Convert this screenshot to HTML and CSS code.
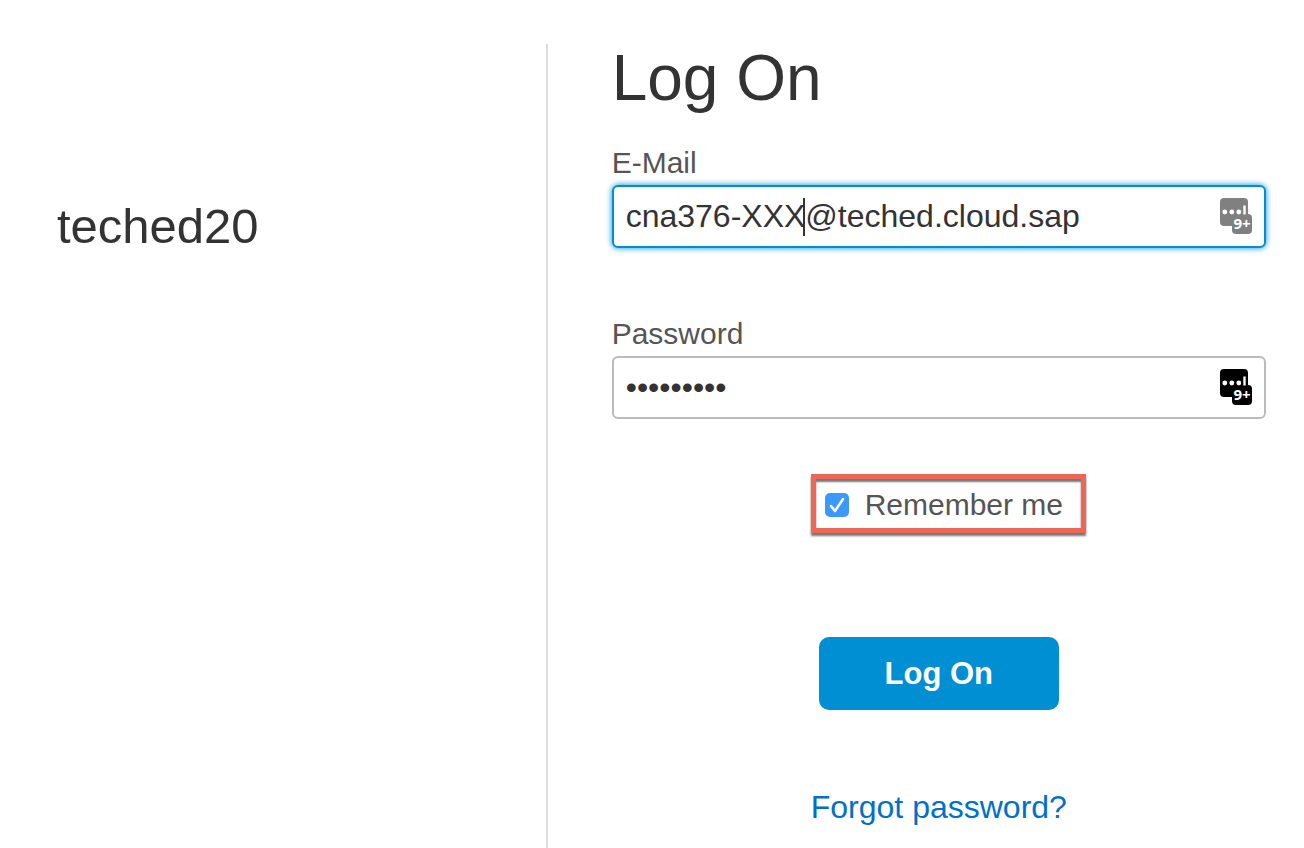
FILE: index.html
```html
<!DOCTYPE html>
<html lang="en">
<head>
<meta charset="utf-8">
<meta name="viewport" content="width=device-width, initial-scale=1">
<title>Log On</title>
<link rel="stylesheet" href="styles.css">
</head>
<body>
<div class="page">
  <aside class="brand">teched20</aside>
  <main class="logon">
    <h1 class="title">Log On</h1>
    <form class="form">
      <div class="field">
        <label class="label" for="email">E-Mail</label>
        <div class="control">
          <input class="input input-active" id="email" type="text" value="cna376-XXX@teched.cloud.sap">
          <span class="caret"></span>
          <svg class="manager manager-muted" viewBox="0 0 32 36" aria-hidden="true">
            <rect width="28" height="28" rx="4"/>
            <rect x="12" y="16" width="20" height="20" rx="4"/>
            <g class="mark"><circle cx="4.8" cy="14" r="2.4"/><circle cx="11.8" cy="14" r="2.4"/><circle cx="18.8" cy="14" r="2.4"/><path d="M23.3 7.5h2.4v9h-2.4z"/></g>
            <text class="count" x="22" y="31">9+</text>
          </svg>
        </div>
      </div>
      <div class="field">
        <label class="label" for="password">Password</label>
        <div class="control">
          <input class="input" id="password" type="password" value="123456789">
          <svg class="manager" viewBox="0 0 32 36" aria-hidden="true">
            <rect width="28" height="28" rx="4"/>
            <rect x="12" y="16" width="20" height="20" rx="4"/>
            <g class="mark"><circle cx="4.8" cy="14" r="2.4"/><circle cx="11.8" cy="14" r="2.4"/><circle cx="18.8" cy="14" r="2.4"/><path d="M23.3 7.5h2.4v9h-2.4z"/></g>
            <text class="count" x="22" y="31">9+</text>
          </svg>
        </div>
      </div>
      <div class="remember">
        <div class="highlight">
          <span class="check">
            <input class="box" id="remember" type="checkbox" checked>
            <svg class="tick" viewBox="0 0 24 24" aria-hidden="true"><path d="M6 13l4 5 8-12"/></svg>
          </span>
          <label class="remember-label" for="remember">Remember me</label>
        </div>
      </div>
      <button class="submit" type="button">Log On</button>
      <a class="forgot" href="#">Forgot password?</a>
    </form>
  </main>
</div>
</body>
</html>
```
FILE: styles.css
```css
* {
  box-sizing: border-box;
}

body {
  margin: 0;
  background: #fff;
  color: #333;
  font-family: "Liberation Sans", Arial, sans-serif;
}

.page {
  display: flex;
  min-height: 100vh;
  padding-top: 44px;
}

.brand {
  width: 42%;
  padding: 152px 57px 0;
  border-right: 2px solid #ddd;
  font-size: 49px;
  line-height: 60px;
}

.logon {
  flex: 1;
  padding: 0 38px 0 64px;
}

.title {
  margin: 0 0 33px;
  font-size: 64px;
  font-weight: 400;
  line-height: 68px;
}

.form {
  display: flex;
  flex-direction: column;
  align-items: center;
}

.field {
  width: 100%;
  margin-bottom: 68px;
}

.field + .field {
  margin-bottom: 55px;
}

.label {
  display: block;
  height: 40px;
  color: #555;
  font-size: 30px;
  line-height: 36px;
}

.control {
  position: relative;
}

.input {
  display: block;
  width: 100%;
  height: 63px;
  padding: 0 72px 0 12px;
  border: 2px solid #bbb;
  border-radius: 6px;
  outline: 0;
  background: #fff;
  color: #333;
  font: 32px "Liberation Sans", Arial, sans-serif;
}

.input-active {
  border-color: #008fd3;
  box-shadow: 0 0 6px #008fd3;
}

.caret {
  position: absolute;
  top: 13px;
  left: 191px;
  width: 2px;
  height: 38px;
  background: #333;
}

.manager {
  position: absolute;
  top: 13px;
  right: 14px;
  width: 32px;
  height: 36px;
  fill: #000;
}

.manager-muted {
  fill: #808080;
}

.mark {
  fill: #fff;
}

.count {
  fill: #fff;
  font: bold 15px "Noto Sans", sans-serif;
  text-anchor: middle;
}

.remember {
  padding-left: 19px;
}

.highlight {
  display: flex;
  align-items: center;
  gap: 16px;
  height: 59px;
  padding: 3px 18px 0 9px;
  border: 5px solid #ed6756;
  box-shadow: 0 3px 2px #777, inset 0 3px 2px #777;
}

.check {
  position: relative;
  width: 24px;
  height: 24px;
}

.box {
  display: block;
  width: 24px;
  height: 24px;
  margin: 0;
  border-radius: 5px;
  background: #3b99fc;
  appearance: none;
}

.tick {
  position: absolute;
  inset: 0;
  fill: none;
  stroke: #fff;
  stroke-linecap: round;
  stroke-linejoin: round;
  stroke-width: 2.5;
  pointer-events: none;
}

.remember-label {
  color: #555;
  font-size: 30px;
  line-height: 36px;
}

.submit {
  width: 240px;
  height: 73px;
  margin: 104px 0 79px;
  border: 0;
  border-radius: 10px;
  background: #008fd3;
  color: #fff;
  font: bold 31px "Liberation Sans", Arial, sans-serif;
}

.forgot {
  color: #0070ca;
  font-size: 32px;
  line-height: 36px;
  text-decoration: none;
}
```
